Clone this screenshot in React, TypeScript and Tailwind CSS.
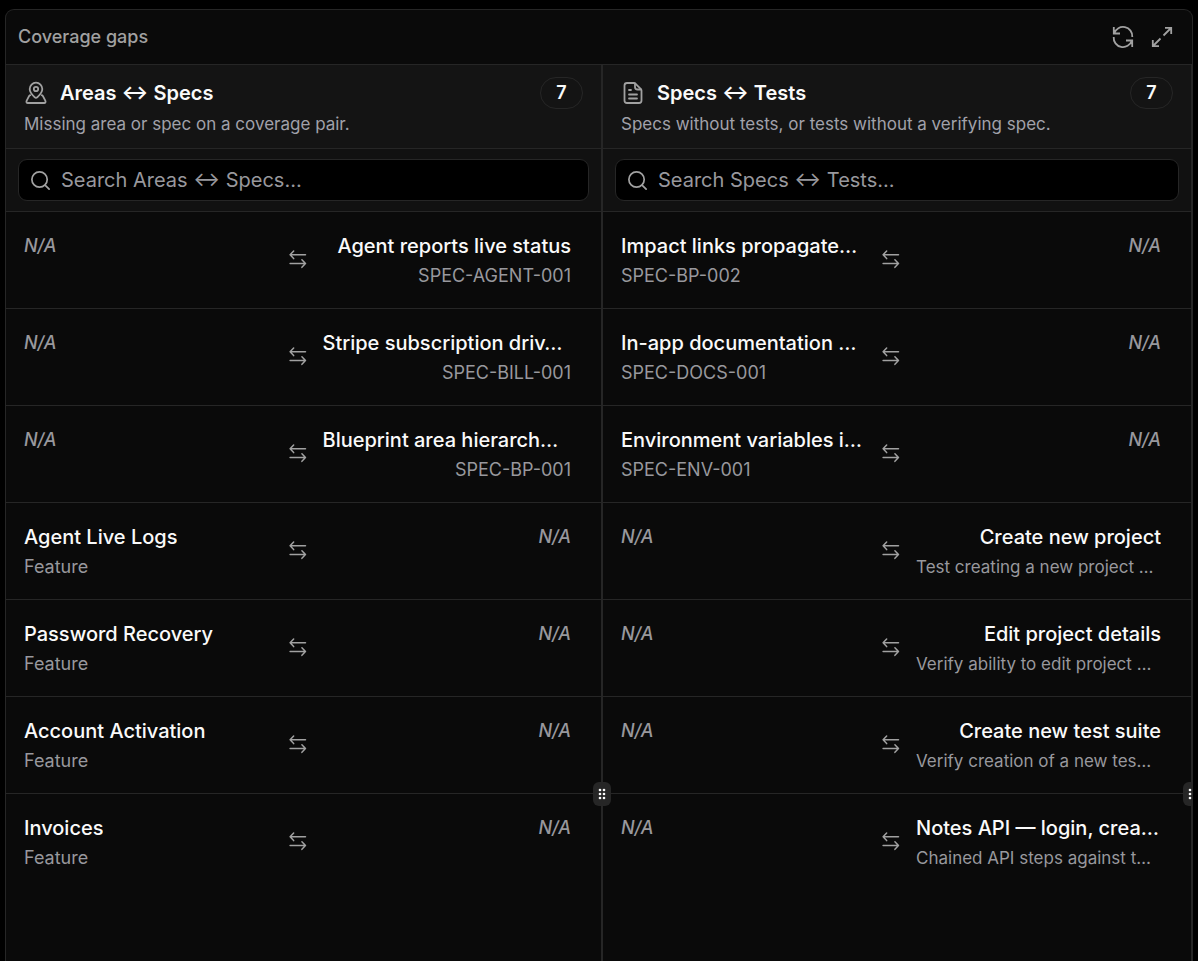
import React, { useState } from 'react';

type Cell = { title?: string; code?: string; summary?: string };
type Gap = { id: string; left: Cell; right: Cell };

const areaGaps: Gap[] = [
  { id: 'a1', left: {}, right: { title: 'Agent reports live status', code: 'SPEC-AGENT-001' } },
  { id: 'a2', left: {}, right: { title: 'Stripe subscription driv…', code: 'SPEC-BILL-001' } },
  { id: 'a3', left: {}, right: { title: 'Blueprint area hierarch…', code: 'SPEC-BP-001' } },
  { id: 'a4', left: { title: 'Agent Live Logs', code: 'Feature' }, right: {} },
  { id: 'a5', left: { title: 'Password Recovery', code: 'Feature' }, right: {} },
  { id: 'a6', left: { title: 'Account Activation', code: 'Feature' }, right: {} },
  { id: 'a7', left: { title: 'Invoices', code: 'Feature' }, right: {} },
];

const specGaps: Gap[] = [
  { id: 's1', left: { title: 'Impact links propagate…', code: 'SPEC-BP-002' }, right: {} },
  { id: 's2', left: { title: 'In-app documentation …', code: 'SPEC-DOCS-001' }, right: {} },
  { id: 's3', left: { title: 'Environment variables i…', code: 'SPEC-ENV-001' }, right: {} },
  { id: 's4', left: {}, right: { title: 'Create new project', summary: 'Test creating a new project …' } },
  { id: 's5', left: {}, right: { title: 'Edit project details', summary: 'Verify ability to edit project …' } },
  { id: 's6', left: {}, right: { title: 'Create new test suite', summary: 'Verify creation of a new tes…' } },
  { id: 's7', left: {}, right: { title: 'Notes API — login, crea…', summary: 'Chained API steps against t…' } },
];

// shortened texts fill the cell and start at its left edge
const fill = (text: string) => (text.endsWith('…') ? 'w-full' : 'max-w-full');

function Icon({ className, children }: { className: string; children: React.ReactNode }) {
  return (
    <svg
      viewBox="0 0 24 24"
      fill="none"
      stroke="currentColor"
      strokeWidth="1.8"
      strokeLinecap="round"
      strokeLinejoin="round"
      className={className}
      aria-hidden="true"
    >
      {children}
    </svg>
  );
}

const mapIcon = (
  <Icon className="w-6 h-6 text-[#a1a1a1]">
    <path d="M13.4 16.200a2 2 0 0 1-2.800 0C8 13.700 5.700 11.500 5.700 8a6.300 6.300 0 0 1 12.600 0c0 3.500-2.300 5.700-4.900 8.200Z" />
    <circle cx="12" cy="8" r="2.200" />
    <path d="M6.200 14.200c-.8.300-1.200.900-1.700 1.900l-1.800 3.600c-.6 1.300-.2 2.300 1.200 2.300h16.200c1.400 0 1.800-1 1.200-2.300l-1.800-3.600c-.5-1-.9-1.600-1.700-1.900" />
  </Icon>
);

const fileIcon = (
  <Icon className="w-6 h-6 text-[#a1a1a1]">
    <path d="M13 2H6a2.500 2.500 0 0 0-2.500 2.500v15A2.500 2.500 0 0 0 6 22h12a2.500 2.500 0 0 0 2.500-2.500v-10c0-.6-.2-1-.6-1.400l-5.500-5.500A2 2 0 0 0 13 2Z" />
    <path d="M14 2.500V6a2.500 2.500 0 0 0 2.500 2.500H20" />
    <path d="M8 9h2M8 13.500h8M8 17.500h8" />
  </Icon>
);

function GapCell({ cell, align }: { cell: Cell; align: 'left' | 'right' }) {
  const side = align === 'right' ? 'items-end' : 'items-start';

  if (!cell.title) {
    return (
      <div className={`flex flex-col ${side}`}>
        <span className="text-lg leading-[30px] font-medium italic text-[#98989d]">N/A</span>
      </div>
    );
  }

  return (
    <div className={`flex flex-col min-w-0 ${side}`}>
      <span className={`${fill(cell.title)} truncate text-xl leading-[30px] font-medium text-[#fafafa]`}>
        {cell.title}
      </span>
      {cell.code && <span className="max-w-full truncate text-lg leading-[30px] text-[#98989d]">{cell.code}</span>}
      {cell.summary && (
        <span className={`${fill(cell.summary)} truncate text-[17px] leading-[30px] text-[#98989d]`}>
          {cell.summary}
        </span>
      )}
    </div>
  );
}

type GapColumnProps = {
  title: string;
  description: string;
  icon: React.ReactNode;
  gaps: Gap[];
};

function GapColumn({ title, description, icon, gaps }: GapColumnProps) {
  const [query, setQuery] = useState('');
  const visible = gaps.filter((gap) =>
    [gap.left.title, gap.left.code, gap.right.title, gap.right.code, gap.right.summary]
      .join(' ')
      .toLowerCase()
      .includes(query.toLowerCase())
  );

  return (
    <section className="min-w-0">
      {/* Column header */}
      <div className="px-[18px] pt-3 pb-[9px] bg-[#141414] border-b border-[#262626]">
        <div className="flex items-center justify-between">
          <h2 className="flex items-center gap-3 text-xl font-semibold text-[#fafafa]">
            {icon}
            {title}
          </h2>
          <span className="w-[43px] h-8 flex items-center justify-center rounded-full border border-[#262626] text-lg font-semibold text-[#fafafa]">
            {gaps.length}
          </span>
        </div>
        <p className="truncate text-[17px] leading-[30px] text-[#a1a1aa]">{description}</p>
      </div>

      {/* Search */}
      <div className="px-3 py-[10px] bg-[#111111] border-b border-[#262626]">
        <label className="flex items-center gap-[9px] h-[42px] px-[10px] rounded-[9px] border border-[#262626] bg-black">
          <Icon className="w-[23px] h-[23px] shrink-0 text-[#a1a1a1]">
            <circle cx="11" cy="11" r="8" />
            <path d="m17 17 4 4" />
          </Icon>
          <input
            type="text"
            aria-label={`Search ${title}`}
            value={query}
            onChange={(e) => setQuery(e.target.value)}
            placeholder={`Search ${title}…`}
            className="flex-1 min-w-0 bg-transparent text-xl text-[#fafafa] placeholder:text-[#98989d] outline-none"
          />
        </label>
      </div>

      {/* Rows */}
      <ul>
        {visible.map((gap) => (
          <li
            key={gap.id}
            className="grid grid-cols-[minmax(0,1fr)_20px_minmax(0,1fr)] gap-[15px] items-start pl-[18px] pr-[30px] pt-[19px] pb-[17px] border-b border-[#262626] last:border-b-0"
          >
            <GapCell cell={gap.left} align="left" />
            <Icon className="w-5 h-5 mt-[18px] text-[#a1a1a1]">
              <path d="M21 7H2.500m4.300-4.500L2.500 7l4.300 4.500M2.500 17.500H21m-4.300-4.500 4.300 4.500-4.300 4.500" />
            </Icon>
            <GapCell cell={gap.right} align="right" />
          </li>
        ))}
      </ul>
    </section>
  );
}

function ResizeHandle({ label }: { label: string }) {
  return (
    <div className="relative bg-[#262626]">
      <button
        type="button"
        aria-label={label}
        className="absolute top-[717px] left-1/2 -translate-x-1/2 w-[18px] h-6 flex items-center justify-center rounded-md bg-[#262626] text-[#fafafa] cursor-col-resize"
      >
        <svg viewBox="0 0 8 12" fill="currentColor" className="w-2 h-3" aria-hidden="true">
          <circle cx="2" cy="2" r="1.300" />
          <circle cx="6" cy="2" r="1.300" />
          <circle cx="2" cy="6" r="1.300" />
          <circle cx="6" cy="6" r="1.300" />
          <circle cx="2" cy="10" r="1.300" />
          <circle cx="6" cy="10" r="1.300" />
        </svg>
      </button>
    </div>
  );
}

export default function App() {
  return (
    <main className="min-h-screen flex flex-col pt-[9px] px-[5px] bg-black font-['Inter','Liberation_Sans',sans-serif]">
      <div className="flex-1 flex flex-col overflow-hidden rounded-t-[9px] border border-b-0 border-[#262626] bg-[#0a0a0a]">
        {/* Panel header */}
        <header className="flex items-center justify-between h-[55px] pl-3 pr-[18px] border-b border-[#262626]">
          <h1 className="text-lg font-medium text-[#a1a1a1]">Coverage gaps</h1>
          <div className="flex items-center gap-[15px] text-[#a1a1a1]">
            <button type="button" aria-label="Refresh">
              <svg viewBox="0 0 24 24" fill="none" stroke="currentColor" strokeWidth="1.8" className="w-6 h-6" aria-hidden="true">
                <path d="M2.800 2v6.500H9M3.200 8.300A9.300 9.300 0 0 1 21.300 12" />
                <path d="M21.200 22v-6.500H15M20.800 15.700A9.300 9.300 0 0 1 2.700 12" />
              </svg>
            </button>
            <button type="button" aria-label="Expand">
              <svg viewBox="0 0 24 24" fill="none" stroke="currentColor" strokeWidth="1.8" className="w-6 h-6" aria-hidden="true">
                <path d="M15 2.800h6.200V9M21 3l-7.500 7.500" />
                <path d="M2.800 15v6.200H9M3 21l7.500-7.500" />
              </svg>
            </button>
          </div>
        </header>

        {/* Columns */}
        <div className="flex-1 grid grid-cols-[minmax(0,595fr)_2px_minmax(0,588fr)_1px]">
          <GapColumn
            title="Areas ↔ Specs"
            description="Missing area or spec on a coverage pair."
            icon={mapIcon}
            gaps={areaGaps}
          />
          <ResizeHandle label="Resize areas column" />
          <GapColumn
            title="Specs ↔ Tests"
            description="Specs without tests, or tests without a verifying spec."
            icon={fileIcon}
            gaps={specGaps}
          />
          <ResizeHandle label="Resize specs column" />
        </div>
      </div>
    </main>
  );
}
